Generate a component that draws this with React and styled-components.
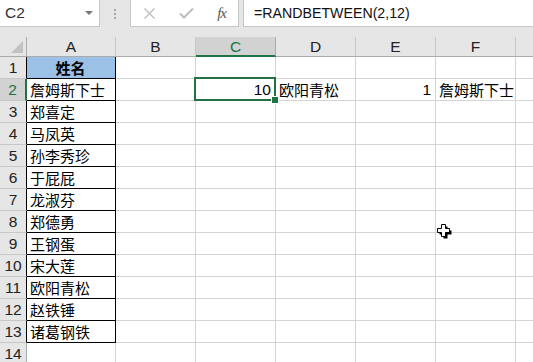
import React from 'react';
import styled, { createGlobalStyle } from 'styled-components';

const GlobalStyle = createGlobalStyle`
  html, body {
    margin: 0;
    padding: 0;
    background: #ffffff;
    overflow: hidden;
  }
  body {
    font-family: "Liberation Sans", "Noto Sans CJK SC", sans-serif;
    color: #000;
  }
`;

const GREEN = '#217346';
const GRID = '#d4d4d4';

const Page = styled.div`
  position: relative;
  width: 533px;
  height: 362px;
  overflow: hidden;
  background: #fff;
`;

// formula bar
const Toolbar = styled.div`
  display: flex;
  align-items: flex-start;
  height: 37px;
  background: #e6e6e6;
  box-sizing: border-box;
`;

const NameBox = styled.div`
  display: flex;
  align-items: center;
  justify-content: space-between;
  width: 100px;
  height: 27px;
  box-sizing: border-box;
  background: #fff;
  border-right: 1px solid #c6c6c6;
  border-bottom: 1px solid #c6c6c6;
  padding: 0 6px 0 5px;
  font-size: 15.5px;
  color: #333;
`;

const DropArrow = styled.span`
  width: 0;
  height: 0;
  border-left: 4px solid transparent;
  border-right: 4px solid transparent;
  border-top: 4px solid #777;
`;

const Grip = styled.div`
  width: 30px;
  height: 27px;
  display: flex;
  flex-direction: column;
  align-items: center;
  justify-content: center;
  gap: 2px;

  span {
    width: 2px;
    height: 2px;
    background: #a6a6a6;
  }
`;

const FxBox = styled.div`
  display: flex;
  align-items: center;
  justify-content: space-between;
  width: 109px;
  height: 27px;
  box-sizing: border-box;
  background: #fff;
  border: 1px solid #c6c6c6;
  border-top: none;
  padding: 0 12px 0 12px;
`;

const Fx = styled.span`
  font-family: "Liberation Serif", serif;
  font-style: italic;
  font-size: 15px;
  color: #555;
  letter-spacing: -1px;
`;

const FormulaInput = styled.div`
  flex: 1;
  height: 27px;
  margin-left: 4px;
  box-sizing: border-box;
  background: #fff;
  border-left: 1px solid #c6c6c6;
  border-bottom: 1px solid #c6c6c6;
  padding-left: 10px;
  display: flex;
  align-items: center;
  font-size: 14.2px;
  color: #111;
`;

// sheet
const Sheet = styled.div`
  display: grid;
  grid-template-columns: 27px 89px repeat(6, 80px);
  grid-template-rows: 20px repeat(14, 22px);
  font-size: 15px;
`;

const Corner = styled.div`
  position: relative;
  background: #e6e6e6;
  border-right: 1px solid #ababab;
  border-bottom: 1px solid #ababab;
  box-sizing: border-box;

  &::after {
    content: '';
    position: absolute;
    right: 3px;
    bottom: 3px;
    width: 0;
    height: 0;
    border-left: 12px solid transparent;
    border-bottom: 12px solid #c2c2c2;
  }
`;

const ColHeader = styled.div`
  box-sizing: border-box;
  display: flex;
  align-items: center;
  justify-content: center;
  background: ${p => (p.$active ? '#d2d2d2' : '#e6e6e6')};
  border-right: 1px solid ${p => (p.$active ? '#ababab' : '#c8c8c8')};
  border-bottom: ${p => (p.$active ? `2px solid ${GREEN}` : '1px solid #ababab')};
  color: ${p => (p.$active ? GREEN : '#222')};
  font-size: 15.5px;
  padding-top: ${p => (p.$active ? '1px' : '0')};
`;

const RowHeader = styled.div`
  box-sizing: border-box;
  display: flex;
  align-items: center;
  justify-content: center;
  background: ${p => (p.$active ? '#d2d2d2' : '#e6e6e6')};
  border-right: ${p =>
    p.$active ? `2px solid ${GREEN}` : p.$table ? '1px solid #000' : '1px solid #ababab'};
  border-bottom: 1px solid #c8c8c8;
  color: ${p => (p.$active ? GREEN : '#222')};
  font-size: 15.5px;
`;

const Cell = styled.div`
  position: relative;
  box-sizing: border-box;
  display: flex;
  align-items: center;
  justify-content: ${p => (p.$align === 'right' ? 'flex-end' : p.$align === 'center' ? 'center' : 'flex-start')};
  padding: 0 4px 0 3px;
  white-space: nowrap;
  background: ${p => (p.$head ? '#9bc2e6' : '#fff')};
  border-right: 1px solid ${p => (p.$table ? '#000' : GRID)};
  border-bottom: 1px solid ${p => (p.$table ? '#000' : GRID)};
  font-family: "Noto Sans CJK SC", "Liberation Sans", sans-serif;
  font-size: 15px;
  font-weight: ${p => (p.$head ? 700 : 400)};
  line-height: 1;
`;

const Num = styled.span`
  font-family: "Liberation Sans", sans-serif;
  font-size: 15.5px;
`;

const Selection = styled.div`
  position: absolute;
  z-index: 2;
  left: -2px;
  top: -2px;
  right: -1px;
  bottom: -1px;
  border: 2px solid ${GREEN};
  pointer-events: none;
`;

const FillHandle = styled.div`
  position: absolute;
  right: -5px;
  bottom: -5px;
  width: 6px;
  height: 6px;
  background: ${GREEN};
  border: 1px solid #fff;
`;

const Cursor = styled.svg`
  position: absolute;
  left: 436px;
  top: 223px;
`;

const names = [
  '詹姆斯下士',
  '郑喜定',
  '马凤英',
  '孙李秀珍',
  '于屁屁',
  '龙淑芬',
  '郑德勇',
  '王钢蛋',
  '宋大莲',
  '欧阳青松',
  '赵铁锤',
  '诸葛钢铁',
];

const cols = ['A', 'B', 'C', 'D', 'E', 'F', ''];

const row2 = {
  C: { v: '10', align: 'right', num: true, selected: true },
  D: { v: '欧阳青松' },
  E: { v: '1', align: 'right', num: true },
  F: { v: '詹姆斯下士' },
};

export default function App() {
  const rows = Array.from({ length: 14 }, (_, i) => i + 1);

  return (
    <Page>
      <GlobalStyle />
      <Toolbar>
        <NameBox>
          <span>C2</span>
          <DropArrow />
        </NameBox>
        <Grip>
          <span />
          <span />
          <span />
        </Grip>
        <FxBox>
          <svg width="13" height="13" viewBox="0 0 13 13">
            <path d="M1.5 1.5 L11.5 11.5 M11.5 1.5 L1.5 11.5" stroke="#bdbdbd" strokeWidth="1.4" fill="none" />
          </svg>
          <svg width="15" height="12" viewBox="0 0 15 12">
            <path d="M1 6.5 L5 10.5 L14 1.5" stroke="#bdbdbd" strokeWidth="2" fill="none" />
          </svg>
          <Fx>fx</Fx>
        </FxBox>
        <FormulaInput>=RANDBETWEEN(2,12)</FormulaInput>
      </Toolbar>

      <Sheet>
        <Corner />
        {cols.map((c, i) => (
          <ColHeader key={`h${i}`} $active={c === 'C'}>{c}</ColHeader>
        ))}

        {rows.map(r => (
          <React.Fragment key={r}>
            <RowHeader $active={r === 2} $table={r <= 13}>{r}</RowHeader>
            {cols.map((c, ci) => {
              if (c === 'A') {
                if (r === 1) return <Cell key={ci} $table $head $align="center">姓名</Cell>;
                if (r <= 13) return <Cell key={ci} $table>{names[r - 2]}</Cell>;
                return <Cell key={ci} />;
              }
              const d = r === 2 ? row2[c] : null;
              if (!d) return <Cell key={ci} />;
              return (
                <Cell key={ci} $align={d.align}>
                  {d.num ? <Num>{d.v}</Num> : d.v}
                  {d.selected && (
                    <Selection>
                      <FillHandle />
                    </Selection>
                  )}
                </Cell>
              );
            })}
          </React.Fragment>
        ))}
      </Sheet>

      <Cursor width="17" height="17" viewBox="0 0 17 17">
        <path d="M6.5 2.5 H10.5 V6.5 H14.5 V10.5 H10.5 V14.5 H6.5 V10.5 H2.5 V6.5 H6.5 Z" fill="#000" transform="translate(1 1)" />
        <path d="M5.5 1.5 H9.5 V5.5 H13.5 V9.5 H9.5 V13.5 H5.5 V9.5 H1.5 V5.5 H5.5 Z" fill="#fff" stroke="#000" strokeWidth="1" />
      </Cursor>
    </Page>
  );
}
